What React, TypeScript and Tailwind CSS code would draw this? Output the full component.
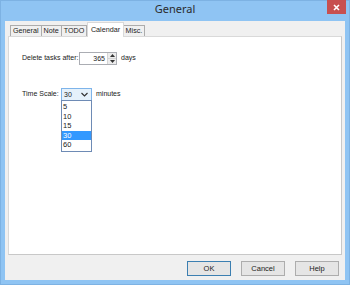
import React, { useState } from "react";

const tabs = ["General", "Note", "TODO", "Calendar", "Misc."];
const scales = ["5", "10", "15", "30", "60"];

const Tab = ({ label, active }: { label: string; active: boolean }) => (
  <div
    className={
      active
        ? "h-[15px] px-[2.5px] -mb-px bg-white border border-b-0 border-[#d9d9d9] text-[7.2px] leading-[13px] text-[#222] whitespace-nowrap z-10"
        : "h-[11px] px-[2px] bg-[#f0f0f0] border border-b-0 border-[#acacac] text-[7.2px] leading-[10px] text-[#222] whitespace-nowrap -ml-px first:ml-0"
    }
  >
    {label}
  </div>
);

const DialogButton = ({ title, primary }: { title: string; primary?: boolean }) => (
  <button
    className={`w-[44px] h-[15px] text-[7.5px] leading-[13px] text-[#222] bg-[#e5e5e5] border ${
      primary ? "border-[#3c7fb1]" : "border-[#adadad]"
    }`}
  >
    {title}
  </button>
);

export default function App() {
  const [scale, setScale] = useState("30");
  const [days] = useState(365);

  return (
    <div
      className="w-[350px] h-[285px] bg-[#8fc4f3] border border-[#7db2e3] flex flex-col"
      style={{ fontFamily: '"Liberation Sans", "Noto Sans", sans-serif' }}
    >
      {/* title bar */}
      <div className="relative h-[20px] flex items-center justify-center pb-[3px]">
        <span className="text-[11px] text-[#2b2b2b]" style={{ fontFamily: '"Noto Sans", sans-serif' }}>
          General
        </span>
        <div className="absolute right-[3px] top-[-1px] w-[19px] h-[14px] bg-[#c75050] flex items-center justify-center">
          <svg width="7" height="7" viewBox="0 0 7 7">
            <path d="M1 1 L6 6 M6 1 L1 6" stroke="white" strokeWidth="1.6" />
          </svg>
        </div>
      </div>

      {/* client */}
      <div className="flex-1 mx-[4px] mb-[4px] bg-[#f0f0f0] flex flex-col pt-[1px]">
        <div className="px-[3px] flex flex-col">
          <div className="flex items-end pl-[2px] h-[14px]">
            {tabs.map((t) => (
              <Tab key={t} label={t} active={t === "Calendar"} />
            ))}
          </div>
          <div className="h-[219px] bg-white border border-[#d9d9d9] border-r-[#c8c8c8] border-b-[#c8c8c8] pl-[13px] pt-[15px] flex flex-col gap-[23px] text-[7px] text-[#222]">
            <div className="flex items-center h-[13px]">
              <span className="w-[57px] shrink-0 whitespace-nowrap">Delete tasks after:</span>
              <div className="w-[38px] h-[13px] shrink-0 border border-[#abadb3] flex bg-white">
                <span className="flex-1 text-right pr-[2px] leading-[11px]">{days}</span>
                <div className="w-[9px] flex flex-col border-l border-[#d4d4d4]">
                  <div className="flex-1 bg-[#ececec] flex items-center justify-center border-b border-[#d4d4d4]">
                    <svg width="5" height="3" viewBox="0 0 5 3">
                      <path d="M0 3 L2.5 0 L5 3 Z" fill="#333" />
                    </svg>
                  </div>
                  <div className="flex-1 bg-[#ececec] flex items-center justify-center">
                    <svg width="5" height="3" viewBox="0 0 5 3">
                      <path d="M0 0 L2.5 3 L5 0 Z" fill="#333" />
                    </svg>
                  </div>
                </div>
              </div>
              <span className="ml-[4px] whitespace-nowrap">days</span>
            </div>

            <div className="flex items-center h-[13px]">
              <span className="w-[39px] shrink-0 whitespace-nowrap">Time Scale:</span>
              <div className="relative shrink-0">
                <div className="w-[31px] h-[13px] border border-[#7eb4ea] bg-[#e5f1fb] flex items-center">
                  <span className="flex-1 pl-[2px] leading-[11px]">{scale}</span>
                  <svg width="9" height="5" viewBox="0 0 9 5" className="mr-[2px]">
                    <path d="M1.5 1 L4.5 4 L7.5 1" stroke="#333" strokeWidth="1.2" fill="none" />
                  </svg>
                </div>
                <div className="absolute left-0 top-[12px] w-[31px] border border-[#6e8bb5] bg-white flex flex-col py-[1px] z-20">
                  {scales.map((s) => (
                    <div
                      key={s}
                      onClick={() => setScale(s)}
                      className={`h-[9.5px] text-[7.5px] leading-[9.5px] pl-[1px] overflow-hidden ${
                        s === "30" ? "bg-[#3399ff] text-white" : "text-[#222]"
                      }`}
                    >
                      {s}
                    </div>
                  ))}
                </div>
              </div>
              <span className="ml-[4px] whitespace-nowrap">minutes</span>
            </div>
          </div>
        </div>

        <div className="flex justify-end gap-[10px] pr-[6px] pt-[6px]">
          <DialogButton title="OK" primary />
          <DialogButton title="Cancel" />
          <DialogButton title="Help" />
        </div>
      </div>
    </div>
  );
}
